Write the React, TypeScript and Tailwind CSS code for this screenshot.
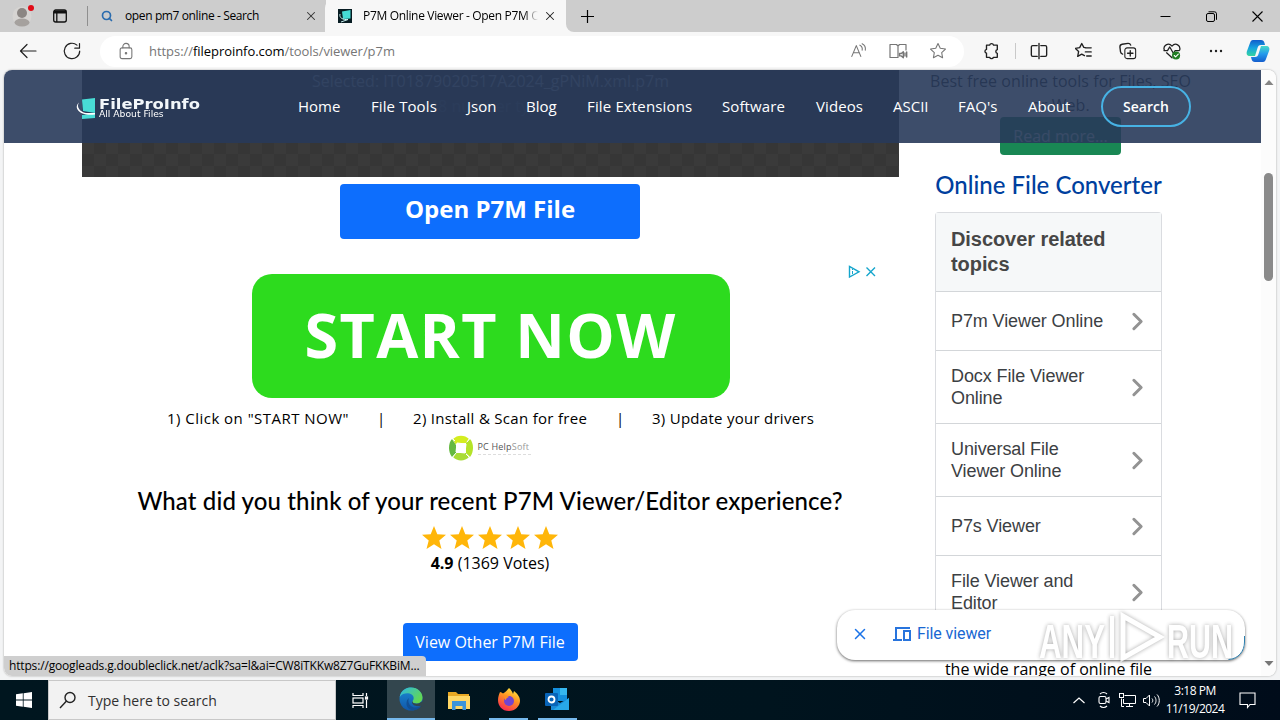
import type { ReactNode } from 'react'
import { ChevronRight, X, Search } from 'lucide-react'

const NAV = [
  { label: 'Home', w: 'w-[43px]' },
  { label: 'File Tools', w: 'w-[66px] tracking-[0.1px]' },
  { label: 'Json', w: 'w-[29px]' },
  { label: 'Blog', w: 'w-[31px]' },
  { label: 'File Extensions', w: 'w-[105px] tracking-[0.15px]' },
  { label: 'Software', w: 'w-[64px] tracking-[0.1px]' },
  { label: 'Videos', w: 'w-[47px] tracking-[0.1px]' },
  { label: 'ASCII', w: 'w-[35px]' },
  { label: "FAQ's", w: 'w-[40px]' },
  { label: 'About', w: 'w-[43px]' },
]

const TOPICS = [
  { lines: ['P7m Viewer Online'], h: 'h-[59px]' },
  { lines: ['Docx File Viewer', 'Online'], h: 'h-[73px]' },
  { lines: ['Universal File', 'Viewer Online'], h: 'h-[73px]' },
  { lines: ['P7s Viewer'], h: 'h-[59px]' },
  { lines: ['File Viewer and', 'Editor'], h: 'h-[73px]' },
]

function Icon({ className, size = 20, children }: { className?: string; size?: number; children: ReactNode }) {
  return (
    <svg className={`shrink-0 ${className ?? ''}`} width={size} height={size} viewBox="0 0 20 20" fill="none" stroke="currentColor" strokeWidth="1.2" strokeLinecap="round" strokeLinejoin="round">
      {children}
    </svg>
  )
}

function TabBar() {
  return (
    <div className="flex h-8 shrink-0 bg-[#f7f7f7]">
      <div className="flex w-[326px] shrink-0 items-center rounded-br-lg bg-[#cdcdcd] pl-[12px]">
        <svg width="24" height="24" viewBox="0 0 24 24" className="shrink-0">
          <circle cx="10" cy="12" r="9.5" fill="#d6d4d2" />
          <circle cx="10" cy="9" r="5" fill="#8b8683" />
          <ellipse cx="10" cy="18.5" rx="7.5" ry="4" fill="#a5a19e" />
          <circle cx="19" cy="4" r="3" fill="#e10b17" />
        </svg>
        <svg width="16" height="16" viewBox="0 0 16 16" className="ml-4 shrink-0" fill="none" stroke="#111" strokeWidth="1.3">
          <rect x="1.7" y="2" width="12.6" height="12" rx="2" />
          <path d="M2 4h12" strokeWidth="3" />
          <path d="M4.800 5v9" />
        </svg>
        <div className="ml-[19px] h-5 w-px bg-[#8f8f8f]" />
        <Search className="ml-[13px] shrink-0 text-[#2b6cae]" size={12} strokeWidth={3.4} />
        <span className="ml-[12px] w-[179px] whitespace-nowrap text-[12px] tracking-[-0.38px] text-black">open pm7 online - Search</span>
        <X size={14} strokeWidth={1.8} className="shrink-0 text-[#333]" />
      </div>
      <div className="-ml-2 w-2 bg-[#cdcdcd]" />
      <div className="z-10 -ml-px flex w-[241px] shrink-0 items-center rounded-t-lg bg-[#f7f7f7] pl-[13px]">
        <svg width="14" height="14" viewBox="0 0 14 14" className="shrink-0">
          <rect width="14" height="14" fill="#071c22" />
          <path d="M4 2.500 12.500 1v8.500L5 10z" fill="#46dbd6" />
          <path d="M2 5c-1 4 3 6 8 5.500l-7 2.500" stroke="#c8eff0" fill="none" />
        </svg>
        <span className="ml-[11px] w-[175px] overflow-hidden whitespace-nowrap bg-linear-to-r from-black from-92% to-transparent bg-clip-text text-[12px] tracking-[-0.33px] text-transparent">P7M Online Viewer - Open P7M O</span>
        <X size={14} strokeWidth={1.8} className="ml-[5px] shrink-0 text-[#222]" />
      </div>
      <div className="flex flex-1 items-center rounded-bl-lg bg-[#cdcdcd] pl-[14px] text-black">
        <svg width="15" height="15" viewBox="0 0 15 15" stroke="currentColor" strokeWidth="1.2"><path d="M7.500 1v13M1 7.500h13" /></svg>
        <div className="ml-auto flex items-center pr-[17px]">
          <svg width="11" height="11" viewBox="0 0 11 11" stroke="currentColor"><path d="M.5 5.500h10" /></svg>
          <svg className="ml-[35px]" width="11" height="11" viewBox="0 0 11 11" fill="none" stroke="currentColor"><rect x=".5" y="2.5" width="8" height="8" rx="1.5" /><path d="M2.500 .8h6a2 2 0 0 1 2 2v6" /></svg>
          <svg className="ml-[35px]" width="11" height="11" viewBox="0 0 11 11" stroke="currentColor" strokeWidth="1.1"><path d="m.5.5 10 10m0-10-10 10" /></svg>
        </div>
      </div>
    </div>
  )
}

function Toolbar() {
  return (
    <div className="flex h-[38px] shrink-0 items-center bg-[#f7f7f7] text-[#202020]">
      <Icon className="ml-[18px]"><path d="M18 10H2.500M9 3.500 2.500 10 9 16.500" /></Icon>
      <Icon className="ml-6"><path d="M17.700 10A7.700 7.700 0 1 1 15 4.100M17.500 2.500v4.700h-4.700" /></Icon>
      <div className="ml-[18px] flex h-[31px] w-[864px] shrink-0 items-center rounded-full bg-white pl-[17px] pr-[17px] text-[#767676]">
        <Icon size={18}><rect x="3.5" y="6.5" width="13" height="12" rx="2" /><path d="M6.500 6.500V5a3.500 3.500 0 0 1 7 0v1.500" /><circle cx="10" cy="12.5" r=".8" fill="currentColor" /></Icon>
        <span className="ml-[14px] flex-1 whitespace-nowrap pt-px text-[13px] tracking-[-0.05px]">
          https://<span className="text-black">fileproinfo.com</span>/tools/viewer/p7m
        </span>
        <Icon size={18}><path d="m2 16 5-12 5 12M4 12h6.500M11 3.500c2 1 3 3 2.500 5.500M13.500 2c3 1.500 4 4 3.500 7" /></Icon>
        <Icon className="ml-[20px]" size={20}><path d="M10 16.500H2v-13h6.500L10 5l1.500-1.500H18V9M10 5v11.500" /><path d="M11.500 12.500h1.800l2-1.800v6l-2-1.800h-1.800zM17 12v3m1.700-4v5" strokeWidth="1.4" /></Icon>
        <Icon className="ml-[21px]" size={18}><path d="m10 1.700 2.500 5.300 5.800.8-4.200 4 1 5.700L10 14.800l-5.100 2.700 1-5.700-4.200-4 5.800-.8z" /></Icon>
      </div>
      <div className="flex flex-1 items-center">
        <Icon className="ml-[18px]" size={18}><path d="M5 3.500h3.500a2.200 2.200 0 0 1 4.300 0H17v5a2.100 2.100 0 0 0 0 4.100V17h-4.300a2.200 2.200 0 0 1-4.200 0H5v-4.500a2.200 2.200 0 0 1 0-4.300z" strokeWidth="1.5" /></Icon>
        <div className="ml-[15px] h-4 w-px bg-[#c9c9c9]" />
        <Icon className="ml-[14px]" size={18}><path d="M8 4H3a1.500 1.500 0 0 0-1.500 1.500v9A1.500 1.500 0 0 0 3 16h5M12 4h5a1.500 1.500 0 0 1 1.500 1.500v9A1.500 1.500 0 0 1 17 16h-5M10 1.500v17" strokeWidth="1.5" /></Icon>
        <Icon className="ml-[27px]" size={18}><path d="M12.500 6.500 9.800 6 7.500 1.700 5.200 6.300l-4.700.8 3.500 3.500-1 5.400 4.500-2.500 3 1.600M11.500 6.500H18M11.500 11H18M13 15.500h5" strokeWidth="1.5" /></Icon>
        <Icon className="ml-[26px]" size={18}><rect x="6.5" y="6.5" width="12" height="12" rx="2.5" /><path d="M12.500 9.500v6M9.500 12.500h6M4 13.500A3 3 0 0 1 1.700 11L1 5.500A3 3 0 0 1 3.500 2.500L10 1.500A3 3 0 0 1 13 3.500" strokeWidth="1.5" /></Icon>
        <Icon className="ml-[26px]" size={18}><path d="M1.500 9C-.5 4 6 0 10 4.500 14 0 20 4 18.500 9M10 17.500 4 12M1 9.500h4l2.500-4 4 7 2-3H18" strokeWidth="1.4" /><circle cx="14.5" cy="15" r="4.5" fill="#227d24" stroke="none" /><path d="m12.500 15 1.500 1.500 3-3" stroke="white" /></Icon>
        <svg className="ml-[28px]" width="14" height="4" viewBox="0 0 14 4" fill="currentColor"><circle cx="2" cy="2" r="1.2" /><circle cx="7" cy="2" r="1.2" /><circle cx="12" cy="2" r="1.2" /></svg>
        <svg className="ml-[23px]" width="24" height="24" viewBox="0 0 24 24">
          <defs>
            <linearGradient id="copA" x1="0" y1="0" x2="0" y2="1"><stop stopColor="#105dcc" /><stop offset=".5" stopColor="#16a4df" /><stop offset="1" stopColor="#35d5a0" /></linearGradient>
            <linearGradient id="copB" x1="0" y1="0" x2="0" y2="1"><stop stopColor="#45dbca" /><stop offset=".5" stopColor="#2499ec" /><stop offset="1" stopColor="#145dcd" /></linearGradient>
          </defs>
          <path d="M7 1h8c2 0 3 1 3.500 3L19 6h-4c-2 0-3 1-3.500 3L9 17H4c-3 0-4-2-3-5L4 4c.6-2 1.500-3 3-3z" fill="url(#copA)" />
          <path d="M17 23H9c-2 0-3-1-3.500-3L5 18h4c2 0 3-1 3.500-3L15 7h5c3 0 4 2 3 5l-3 8c-.6 2-1.500 3-3 3z" fill="url(#copB)" />
        </svg>
      </div>
    </div>
  )
}

function SiteNav() {
  return (
    <header className="absolute left-0 top-0 z-20 flex h-[73px] w-[1257px] items-center bg-[rgba(40,58,90,0.9)] font-['Open_Sans',sans-serif] text-white">
      <div className="ml-[72px] mt-[4px] flex w-[222px] shrink-0 items-center">
        <svg width="22" height="23" viewBox="0 0 22 23" className="shrink-0">
          <path d="M6 2.500 19 1v15L7 14z" fill="#48dcd5" />
          <path d="m6 18 13-1.500V21L6 22z" fill="#48dcd5" />
          <path d="M3 5.500C0 10 4 15 10 16h9v1.500c-8 1-15-.5-17.500-5C0 10 1 7 3 5.500z" fill="#fff" />
        </svg>
        <div className="ml-px mt-[-2px]">
          <div className="mt-px origin-left scale-x-[1.17] whitespace-nowrap font-['DejaVu_Sans',sans-serif] text-[14px] font-bold leading-[14px] text-[#f2f7fa]">FileProInfo</div>
          <div className="origin-left scale-x-[1.15] whitespace-nowrap font-['DejaVu_Sans',sans-serif] text-[8px] leading-[8px]">All About Files</div>
        </div>
      </div>
      <nav className="flex items-center gap-[30px] text-[15px]">
        {NAV.map(item => (
          <a key={item.label} className={`shrink-0 whitespace-nowrap ${item.w}`}>{item.label}</a>
        ))}
        <a className="flex h-[41px] w-[90px] items-center justify-center rounded-full border-2 border-[#47b2e4] text-[14px] font-semibold">Search</a>
      </nav>
    </header>
  )
}

function Star() {
  return (
    <svg width="24" height="23" viewBox="0 0 24 23" fill="#ffb609">
      <path d="m12 0 3.300 8.300 8.700.5-6.700 5.600L19.500 23 12 18.300 4.500 23l2.200-8.600L0 8.800l8.700-.5z" />
    </svg>
  )
}

function Ad() {
  return (
    <div className="relative mt-[35px] flex h-[190px] w-[817px] flex-col items-center self-start font-['Open_Sans',sans-serif] text-black">
      <svg className="absolute right-[23px] top-[-9px]" width="28" height="13" viewBox="0 0 28 13" fill="none" stroke="#14a5cc" strokeWidth="1.4">
        <path d="M1.500 1.500v10.500L11 6.800z" />
        <path d="M4.500 6v3m0-5v1" strokeWidth="1" />
        <path d="m18.500 2.500 8.500 8.500m0-8.500L18.500 11" />
      </svg>
      <div className="flex h-[124px] w-[478px] items-center justify-center rounded-[20px] bg-[#2ddb1e] pb-[4px]">
        <span className="whitespace-nowrap text-[61px] font-bold leading-none tracking-[1.4px] text-white">START NOW</span>
      </div>
      <div className="mt-[9px] flex h-[22px] items-center whitespace-nowrap text-[15px]">
        <span className="w-[182px] tracking-[0.47px]">1) Click on "START NOW"</span>
        <span className="w-[64px] text-center">|</span>
        <span className="w-[175px] tracking-[0.3px]">2) Install &amp; Scan for free</span>
        <span className="w-[64px] text-center">|</span>
        <span className="w-[162px] tracking-[0.27px]">3) Update your drivers</span>
      </div>
      <div className="mr-[2px] mt-[6px] flex items-center">
        <svg width="26" height="26" viewBox="0 0 26 26">
          <path d="M5 4C9-.5 17-.5 21 4l-3 4-11 1z" fill="#d4ed20" />
          <path d="M22 4c4 4.500 4 13 0 18l-4-4V8z" fill="#b4e329" />
          <path d="M21 22c-4 4.500-12 4.500-16 0l3-4h10z" fill="#a9dc35" />
          <path d="M4 22C0 17 0 8 4 4l4 6v8z" fill="#65b941" />
          <path d="m9 8 9 1-1 9-9-1zM4 3l3 3M22 3l-3 4M22 23l-4-4M4 23l4-5" fill="#fff" stroke="#fff" />
        </svg>
        <div className="ml-[4px] w-[54px]">
          <div className="whitespace-nowrap text-[9px] leading-[11px] tracking-[0.2px] text-[#555]">PC Help<span className="text-[#999]">Soft</span></div>
          <div className="mt-[2px] h-px bg-[repeating-linear-gradient(90deg,#ddd_0_3px,#fff_3px_5px)]" />
        </div>
      </div>
    </div>
  )
}

function Sidebar() {
  return (
    <aside className="ml-[29px] flex w-[267px] flex-col items-center font-['Open_Sans',sans-serif]">
      <p className="mt-[-1px] whitespace-nowrap text-center text-[16px] leading-6 tracking-[0.05px] text-[#222]">
        Best free online tools for Files, SEO<br />or Web.
      </p>
      <button className="h-[38px] w-[121px] shrink-0 rounded bg-[#198754] text-[16px] text-white/80">Read more...</button>
      <div className="mr-6 flex flex-col items-center">
        <h2 className="mt-[14px] whitespace-nowrap font-['Lato',sans-serif] text-[24px] font-medium leading-[32px] text-[#003f9e]">Online File Converter</h2>
        <div className="mt-[11px] w-[227px] shrink-0 rounded-t border border-b-0 border-[#dadce0] font-['Liberation_Sans',sans-serif]">
          <h3 className="h-[78px] bg-[#f6f8f9] pl-[15px] pt-[14px] text-[20px] font-bold leading-[25px] tracking-[-0.07px] text-[#464646]">Discover related<br />topics</h3>
          {TOPICS.map(topic => (
            <div key={topic.lines[0]} className={`flex items-center justify-between border-t border-[#d3d6d9] pl-[15px] pr-[9px] ${topic.h}`}>
              <span className="whitespace-nowrap text-[18px] leading-[22px] tracking-[-0.1px] text-[#3c4043]">
                {topic.lines.map(line => <span key={line} className="block">{line}</span>)}
              </span>
              <ChevronRight size={29} strokeWidth={2.5} className="text-[#939393]" />
            </div>
          ))}
        </div>
        <p className="mt-[29px] whitespace-nowrap text-[16px] leading-6 text-black">the wide range of online file</p>
      </div>
    </aside>
  )
}

function Page() {
  return (
    <div className="flex h-full w-[1257px] items-start overflow-hidden bg-white">
      <main className="ml-[78px] flex w-[816px] shrink-0 flex-col items-center font-['Open_Sans',sans-serif]">
        <div className="h-[107px] w-[817px] shrink-0 self-start bg-[repeating-conic-gradient(#363636_0_25%,#3a3a3a_0_50%)] bg-[size:24px_24px] text-center text-[16px] leading-6 text-[#8b97a4]">
          <p className="relative top-[-1px]">Selected: IT01879020517A2024_gPNiM.xml.p7m</p>
          <p className="text-[#4e535a]">48 number type.</p>
        </div>
        <button className="mt-[7px] h-[55px] w-[300px] rounded bg-[#0d6efd] pb-[5px] text-[24px] font-bold text-white">Open P7M File</button>
        <Ad />
        <h2 className="mt-[20px] whitespace-nowrap font-['Lato',sans-serif] text-[24px] font-medium leading-[34px] tracking-[0.12px] text-black">What did you think of your recent P7M Viewer/Editor experience?</h2>
        <div className="mt-[8px] flex gap-[4px]">
          {[0, 1, 2, 3, 4].map(i => <Star key={i} />)}
        </div>
        <p className="mt-[2px] whitespace-nowrap text-[16px] leading-6 text-black"><b>4.9</b> (1369 Votes)</p>
        <button className="mt-[48px] h-[38px] w-[175px] whitespace-nowrap rounded bg-[#0d6efd] text-[16px] text-white">View Other P7M File</button>
      </main>
      <Sidebar />
    </div>
  )
}

function Watermark() {
  return (
    <svg className="opacity-75 drop-shadow-[0_0_2px_rgba(0,0,0,0.45)]" width="206" height="60" viewBox="0 0 206 60" fill="#fff" fontFamily="Liberation Sans, sans-serif" fontSize="48" fontWeight="bold">
      <text x="3" y="50" textLength="66" lengthAdjust="spacingAndGlyphs">ANY</text>
      <path d="M87 8v42l37-21z" fill="none" stroke="#fff" strokeWidth="5" />
      <path d="M76 8v42" stroke="#fff" strokeWidth="4" />
      <text x="131" y="50" textLength="66" lengthAdjust="spacingAndGlyphs">RUN</text>
    </svg>
  )
}

function FileViewerPopup() {
  return (
    <div className="absolute left-[833px] top-[540px] z-20 flex h-[50px] w-[408px] items-center rounded-[18px] bg-white pb-[2px] pl-[14px] font-['Open_Sans',sans-serif] shadow-[0_1px_3px_rgba(0,0,0,0.6)]">
      <X size={18} strokeWidth={2} className="text-[#1a73e8]" />
      <svg className="ml-[24px]" width="18" height="16" viewBox="0 0 18 16" fill="none" stroke="#2874dd" strokeWidth="2"><path d="M17 2H3v11M0 14h9" /><rect x="11" y="5" width="6" height="9" /></svg>
      <span className="ml-[6px] whitespace-nowrap font-['Roboto',sans-serif] text-[16px] tracking-[-0.1px] text-[#1967d2]">File viewer</span>
      <svg className="absolute bottom-0 right-0" width="20" height="24" viewBox="0 0 20 24" fill="none" stroke="#2c7fae">
        <path d="M19.500 0v6c0 9-6 17-16 17.500" />
      </svg>
    </div>
  )
}

function Scrollbar() {
  return (
    <div className="flex w-[15px] flex-col items-center bg-[#fcfcfc]">
      <svg className="mt-[9px]" width="10" height="7" viewBox="0 0 10 7" fill="#858585"><path d="m5 1 4.500 5h-9z" /></svg>
      <div className="mt-[87px] h-[108px] w-[9px] rounded-full bg-[#8a8a8a]" />
      <svg className="mb-[9px] mt-auto" width="10" height="7" viewBox="0 0 10 7" fill="#777"><path d="M5 6 .5 1h9z" /></svg>
    </div>
  )
}

function Taskbar() {
  return (
    <div className="flex h-10 shrink-0 bg-linear-to-r from-[#00161f] via-[#00141e] via-60% to-[#000c1a] text-white">
      <div className="flex w-12 items-center justify-center">
        <svg width="16" height="16" viewBox="0 0 16 16" fill="#fff"><path d="M0 2.200 6.800 1.300v6.300H0zM7.600 1.200 16 0v7.600H7.600zM0 8.400h6.800v6.300L0 13.800zM7.600 8.400H16V16l-8.400-1.200z" /></svg>
      </div>
      <div className="flex w-[288px] items-center border border-[#c8c8c8] bg-[#f2f2f2] pl-[10px] text-[#303030]">
        <svg width="18" height="18" viewBox="0 0 18 18" fill="none" stroke="#222" strokeWidth="1.4"><circle cx="11" cy="6.5" r="5" /><path d="M7.500 10 1 17" /></svg>
        <span className="ml-[11px] whitespace-nowrap text-[14px]">Type here to search</span>
      </div>
      <div className="flex w-[51px] items-center justify-center">
        <svg className="mr-[3px]" width="17" height="17" viewBox="0 0 17 17" fill="none" stroke="#fff" strokeWidth="1.2"><path d="M1 1v2.500h10V1M1 16v-2.500h10V16" /><rect x="1" y="6" width="10" height="5" /><path d="M14.500 1v3M14.500 8v8" /><rect x="13.5" y="5" width="2" height="2" /></svg>
      </div>
      <div className="flex h-10 w-12 items-center justify-center border-b-2 border-[#76b9ed] bg-[#33464e]">
        <svg width="24" height="24" viewBox="0 0 24 24">
          <defs>
            <linearGradient id="edgeTop" x1="0" y1="0" x2="1" y2=".6"><stop stopColor="#2bb7e8" /><stop offset="1" stopColor="#63d850" /></linearGradient>
            <linearGradient id="edgeLow" x1="0" y1="0" x2="0" y2="1"><stop stopColor="#1a8ad4" /><stop offset="1" stopColor="#1157a9" /></linearGradient>
          </defs>
          <circle cx="12" cy="12" r="11.5" fill="url(#edgeLow)" />
          <path d="M.7 10C2 3 7 .5 12 .5c7 0 11.500 5 11.500 10 0 4-3 6-6 6-2.500 0-4-1-4-2 0-.7 1.200-1.500 1.200-3.500C14.700 6 5 4 .7 10z" fill="url(#edgeTop)" />
          <path d="M10 11c-2 4 1 9.500 6.500 9.500 3 0 5-1 6-2C18 26 8 24 7.500 17c-.1-3 1-5 2.500-6z" fill="#124f94" />
          <path d="M13.500 14.500c-.3 1 1.500 2.300 4 2.300 2 0 3.500-.8 4.800-2l1.700 0v5l-2-1c-5 1.500-9-1-9-3.500 0-1 .3-1.300.5-.8z" fill="#33464e" />
        </svg>
      </div>
      <div className="flex w-[51px] items-center justify-center pr-[3px]">
        <svg width="22" height="19" viewBox="0 0 22 19"><path d="M0 1h8l2 2h11v15H0z" fill="#e8a824" /><path d="M0 5h22v13H0z" fill="#ffd765" /><path d="M4 10h14v9h-3.500v-4h-7v4H4z" fill="#3b94d9" /></svg>
      </div>
      <div className="ml-[3px] flex w-[39px] items-center justify-center border-b-2 border-[#76b9ed]">
        <svg width="24" height="24" viewBox="0 0 24 24">
          <defs><linearGradient id="fox" x1=".8" y1="0" x2=".3" y2="1"><stop stopColor="#fff044" /><stop offset=".45" stopColor="#ff9422" /><stop offset="1" stopColor="#f92952" /></linearGradient></defs>
          <path d="M3 5c1 0 2 1 3 1.500C9 5 10 3 12 1c2 2 3 3 4 6l1-3c5 4 6 7 6 10 0 5-5 10-11 10C5 24 1 19 1 13c0-3 1-6 2-8z" fill="url(#fox)" />
          <circle cx="12" cy="14" r="5" fill="#7444cf" />
          <path d="M7 9c3-1 4 0 5 1-2 1-3 1-3 3-1 0-2-2-2-4z" fill="#ff8f24" />
        </svg>
      </div>
      <div className="ml-[10px] flex w-[39px] items-center justify-center border-b-2 border-[#76b9ed]">
        <svg width="25" height="24" viewBox="0 0 25 24"><path d="M8 1h14v13H8z" fill="#1490df" /><path d="M15 1h7v7h-7z" fill="#35b8f1" /><path d="m6 11 9 5 9-5v12H6z" fill="#198ad8" /><path d="M24 11v12H8z" fill="#28a8ea" /><rect y="6" width="13" height="13" rx="1" fill="#0864b8" /><circle cx="6.5" cy="12.5" r="3" fill="none" stroke="#fff" strokeWidth="1.8" /></svg>
      </div>
      <div className="ml-auto flex items-center">
        <svg width="12" height="7" viewBox="0 0 12 7" fill="none" stroke="#fff" strokeWidth="1.2"><path d="m.5 6 5.500-5 5.500 5" /></svg>
        <svg className="ml-[12px]" width="14" height="18" viewBox="0 0 14 18" fill="none" stroke="#fff" strokeWidth="1.1"><rect x="2" y="5.5" width="7" height="7" rx="1.5" /><path d="m9 8 3-1.500v5L9 10M3 3c2-2 5-2 7 0M3 15c2 2 5 2 7 0" /></svg>
        <svg className="ml-[8px]" width="17" height="15" viewBox="0 0 17 15" fill="none" stroke="#fff"><path d="M5.500 2.500h11v8h-12V6M10.500 10.500v3M7 13.500h7M2.500 5.500v8H5" /><rect x=".5" y=".5" width="4" height="4" /></svg>
        <svg className="ml-[7px]" width="17" height="15" viewBox="0 0 17 15" fill="none" stroke="#fff"><path d="M.5 5.500H3L6.500 2v11L3 9.500H.5zM9 5.500c1 1 1 3 0 4M11.500 3.500c2 2 2 6 0 8M14 1.500c3 3 3 9 0 12" /></svg>
        <div className="ml-[5px] w-[60px] whitespace-nowrap text-center text-[12px] leading-[18px] tracking-[-0.5px]">
          <div>3:18 PM</div>
          <div>11/19/2024</div>
        </div>
        <svg className="ml-[14px] mr-[24px]" width="17" height="17" viewBox="0 0 17 17" fill="none" stroke="#fff" strokeWidth="1.1"><path d="M1 1h15v11.500h-5L8.500 15.500v-3H1z" /></svg>
      </div>
    </div>
  )
}

export default function App() {
  return (
    <div className="flex h-[720px] w-[1280px] flex-col overflow-hidden bg-[#f3f4f5] font-['Open_Sans',sans-serif]">
      <TabBar />
      <Toolbar />
      <div className="relative mx-1 mb-1 flex h-[606px] shrink-0 overflow-hidden rounded-lg bg-white shadow-[0_0_2px_#999]">
        <Page />
        <Scrollbar />
        <SiteNav />
        <FileViewerPopup />
        <div className="absolute left-[1032px] top-[538px] z-30">
          <Watermark />
        </div>
        <div className="absolute bottom-0 left-0 z-20 flex h-[20px] w-[422px] items-center whitespace-nowrap rounded-tr bg-[#cfcfcf] pl-[5px] text-[12px] tracking-[-0.16px] text-black">
          https://googleads.g.doubleclick.net/aclk?sa=l&amp;ai=CW8iTKKw8Z7GuFKKBiM...
        </div>
      </div>
      <Taskbar />
    </div>
  )
}
